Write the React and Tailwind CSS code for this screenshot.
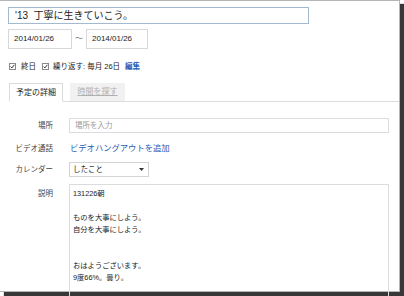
import React from "react";

function Check() {
  return (
    <svg width="7" height="7" viewBox="0 0 7 7" className="shrink-0">
      <rect x="0.5" y="0.5" width="6" height="6" fill="#fff" stroke="#8a8a8a" />
      <path d="M1.6 3.6 L2.9 4.9 L5.4 1.8" fill="none" stroke="#333" strokeWidth="1" />
    </svg>
  );
}

export default function App() {
  return (
    <div className="w-[404px] h-[296px] bg-white overflow-hidden font-['Liberation_Sans','Noto_Sans_CJK_JP',sans-serif] text-[#222]">
      <div className="w-[400px] h-[292px] bg-white border-r border-b border-t border-[#b5b5b5] shadow-[4px_4px_1px_rgba(0,0,0,0.78)] flex flex-col">
        {/* title */}
        <div className="mt-[6px] ml-[8px] w-[301px] h-[22px] border border-[#a3b9d0] flex items-center pl-[6px] text-[10px] whitespace-pre">
          {"'13  丁寧に生きていこう。"}
        </div>
        {/* dates */}
        <div className="mt-[5px] ml-[8px] flex items-center text-[8px]">
          <div className="w-[64px] h-[20px] border border-[#d8d8d8] flex items-center pl-[5px]">2014/01/26</div>
          <span className="w-[14px] text-center text-[#777]">〜</span>
          <div className="w-[62px] h-[20px] border border-[#d8d8d8] flex items-center pl-[5px]">2014/01/26</div>
        </div>
        {/* checkboxes */}
        <div className="mt-[13px] ml-[9px] flex items-center text-[7.5px] h-[9px]">
          <Check />
          <span className="ml-[5px]">終日</span>
          <span className="ml-[6px]"><Check /></span>
          <span className="ml-[4px]">繰り返す: 毎月 26日</span>
          <span className="ml-[5px] text-[#2a5cb8] font-bold">編集</span>
        </div>
        {/* tabs */}
        <div className="mt-[12px] ml-[9px] flex items-end border-b border-[#dcdcdc] h-[19px] text-[8px]">
          <div className="w-[54px] h-[19px] -mb-px border border-[#dcdcdc] border-b-white bg-white flex items-center justify-center">予定の詳細</div>
          <div className="ml-[7px] w-[55px] h-[18px] bg-[#f1f1f1] flex items-center justify-center text-[#b0b0b0] underline">時間を探す</div>
        </div>
        {/* form */}
        <div className="mt-[16px] grid grid-cols-[53px_1fr] gap-x-[16px] pr-[10px] text-[7.5px] items-center">
          <div className="text-right text-[#444]">場所</div>
          <div className="h-[15px] border border-[#dcdcdc] flex items-center pl-[5px] text-[#999]">場所を入力</div>

          <div className="mt-[9px] text-right text-[#444]">ビデオ通話</div>
          <div className="mt-[9px] text-[8.3px] text-[#2a5cb8] pl-[1px]">ビデオハングアウトを追加</div>

          <div className="mt-[8px] text-right text-[#444]">カレンダー</div>
          <div className="mt-[8px]">
            <div className="w-[80px] h-[15px] border border-[#d4d4d4] flex items-center justify-between pl-[3px] pr-[4px]">
              <span>したこと</span>
              <svg width="5" height="3" viewBox="0 0 5 3"><path d="M0 0 H5 L2.5 3 Z" fill="#333" /></svg>
            </div>
          </div>

          <div className="self-start mt-[11px] text-right text-[#444] leading-[12px]">説明</div>
          <div className="self-start mt-[7px] h-[120px] border border-[#dcdcdc] pl-[3px] pt-[3px] text-[7.3px] leading-[12px] text-[#222]">
            <div>131226朝</div>
            <div>&nbsp;</div>
            <div>ものを大事にしよう。</div>
            <div>自分を大事にしよう。</div>
            <div>&nbsp;</div>
            <div>&nbsp;</div>
            <div>おはようございます。</div>
            <div>9度66%。曇り。</div>
          </div>
        </div>
      </div>
    </div>
  );
}
